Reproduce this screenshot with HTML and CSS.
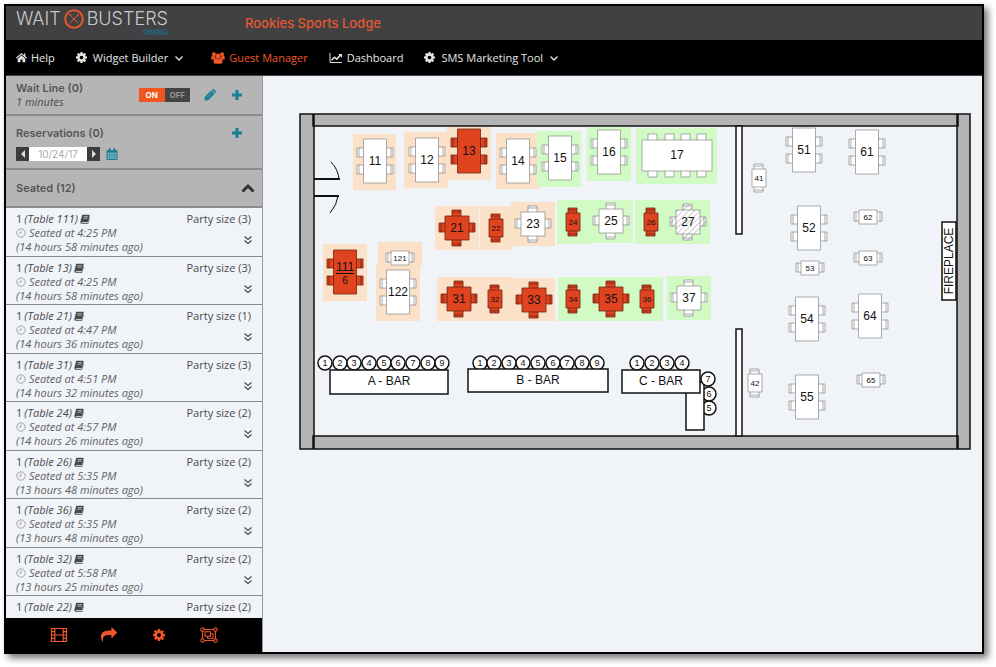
FILE: index.html
```html
<!DOCTYPE html>
<html lang="en">
<head>
<meta charset="utf-8">
<meta name="viewport" content="width=device-width, initial-scale=1">
<title>Waitbusters Dining - Guest Manager</title>
<link rel="stylesheet" href="styles.css">
</head>
<body>
<svg class="sprite" aria-hidden="true">
  <symbol id="home" viewBox="0 0 16 16"><path d="M8 1.500 0 8.500l1 1.200 7-6 7 6 1-1.200-2.500-2.200V2h-2v2.600z"/><path d="M8 5 2.500 9.700V15h4v-4h3v4h4V9.700z"/></symbol>
  <symbol id="cog" viewBox="0 128 1536 1536"><path d="M1024 896q0-106-75-181t-181-75-181 75-75 181 75 181 181 75 181-75 75-181zm512-109v222q0 12-8 23t-20 13l-185 28q-19 54-39 91 35 50 107 138 10 12 10 25t-9 23q-27 37-99 108t-94 71q-12 0-26-9l-138-108q-44 23-91 38-16 136-29 186-7 28-36 28h-222q-14 0-24.500-8.500t-11.500-21.500l-28-184q-49-16-90-37l-141 107q-10 9-25 9-14 0-25-11-126-114-165-168-7-10-7-23 0-12 8-23 15-21 51-66.500t54-70.500q-27-50-41-99l-183-27q-13-2-21-12.500t-8-23.500v-222q0-12 8-23t19-13l186-28q14-46 39-92-40-57-107-138-10-12-10-24 0-10 9-23 26-36 98.500-107.500t94.500-71.500q13 0 26 10l138 107q44-23 91-38 16-136 29-186 7-28 36-28h222q14 0 24.500 8.500t11.500 21.500l28 184q49 16 90 37l142-107q9-9 24-9 13 0 25 10 129 119 165 170 7 8 7 22 0 12-8 23-15 21-51 66.500t-54 70.500q26 50 41 98l183 28q13 2 21 12.500t8 23.500z"/></symbol>
  <symbol id="users" viewBox="0 0 18 16"><circle cx="3.500" cy="3" r="2.600"/><circle cx="14.500" cy="3" r="2.600"/><circle cx="9" cy="5.500" r="3.400"/><path d="M0 10V7q0-2 2-2 2 1 3 .5Q5 8 6.500 10zM18 10V7q0-2-2-2-2 1-3 .5Q13 8 11.500 10z"/><path d="M3 13q0-4.500 3-4.500 3 2 6 0 3 0 3 4.500 0 2.500-2.500 2.500h-7Q3 15.500 3 13z"/></symbol>
  <symbol id="chart" viewBox="0 0 18 16"><path d="M1 1v13h16" fill="none" stroke="currentColor" stroke-width="1.300"/><path d="m3 11 4-4 3 2.500L15 4" fill="none" stroke="currentColor" stroke-width="2"/><path d="M12 2.500h5v5z"/></symbol>
  <symbol id="chevron" viewBox="0 0 10 10"><path d="m1.500 3.500 3.500 3.500 3.500-3.500" fill="none" stroke="currentColor" stroke-width="1.300"/></symbol>
  <symbol id="up" viewBox="0 0 14 10"><path d="m1.500 8.500 5.500-5.500 5.500 5.500" fill="none" stroke="currentColor" stroke-width="3"/></symbol>
  <symbol id="pencil" viewBox="0 0 14 14"><path d="m1 9 7.500-7.500L12.500 5.500l-7.500 7.500L.5 13.500zM9.300 1l.7-.6q.8-.8 1.600 0l2 2q.8.8 0 1.600l-.6.700z"/><path d="m4 9.500 5-5" stroke="#b5b5b5" stroke-width=".6"/></symbol>
  <symbol id="plus" viewBox="0 0 12 12"><path d="M4.500 1h3v3.500H11v3H7.500V11h-3V7.500H1v-3h3.500z"/></symbol>
  <symbol id="left" viewBox="0 0 8 8"><path d="M6 0v8L2 4z"/></symbol>
  <symbol id="right" viewBox="0 0 8 8"><path d="M2 0v8l4-4z"/></symbol>
  <symbol id="calendar" viewBox="0 0 12 12"><path d="M1 2.500h10v9H1z" fill="#7fb3bf" stroke="currentColor"/><path d="M1 2h10v2.500H1zM3 0h1.500v3H3zM7.500 0H9v3H7.500z"/><path d="M1 7h10M1 9.200h10M3.600 4.500v7M6 4.500v7M8.400 4.500v7" stroke="currentColor" stroke-width=".5"/></symbol>
  <symbol id="book" viewBox="0 0 12 12"><path d="M3.500 1h7q1.500 0 1 1.500L9.700 9.300Q9.500 10 8.700 10H2.500q-.7.500 0 .8H9.500L11.500 4q.5.500.3 1.200L10 11q-.2.800-1 .8H2Q.2 11.500.4 9.500L2.300 2q.3-1 1.200-1z"/><path d="M4.500 3.200h5M4 5h5" stroke="#f1f4f8" stroke-width=".7"/></symbol>
  <symbol id="clock" viewBox="0 0 12 12"><circle cx="6" cy="6" r="5" fill="none" stroke="currentColor" stroke-width=".9"/><path d="M6 3v3.300H3.700" fill="none" stroke="currentColor" stroke-width=".8"/></symbol>
  <symbol id="down2" viewBox="0 0 10 10"><path d="m1.500 1.500 3.500 3 3.500-3M1.500 5.500l3.500 3 3.500-3" fill="none" stroke="currentColor" stroke-width="1.200"/></symbol>
  <symbol id="film" viewBox="0 0 18 16"><path d="M1.500 1.500h15v13h-15zM4.800 1.500v13M13.200 1.500v13M4.800 8h8.400M1.500 4.700h3.300M1.500 8h3.300M1.500 11.300h3.300M13.200 4.700h3.300M13.200 8h3.300M13.200 11.300h3.300" fill="none" stroke="currentColor" stroke-width="1.200"/></symbol>
  <symbol id="share" viewBox="0 0 1792 1792"><path d="M1792 640q0 26-19 45l-512 512q-19 19-45 19t-45-19-19-45v-256h-224q-98 0-175.500 6t-154 21.500-133 42.500-105.500 69.500-80 101-48.500 138.500-17.500 181q0 55 5 123 0 6 2.500 23.500t2.500 26.500q0 15-8.500 25t-23.500 10q-16 0-28-17-7-9-13-22t-13.500-30-10.500-24q-127-285-127-451 0-199 53-333 162-403 875-403h224v-256q0-26 19-45t45-19 45 19l512 512q19 19 19 45z"/></symbol>
  <symbol id="group" viewBox="0 0 18 16"><path d="M2.500 2.500h13v11h-13zM5 4.800h5.500v4.400H5zM10.500 6.800H13v4.400H7.500v-2" fill="none" stroke="currentColor" stroke-width="1.100"/><path d="M1 1h3v3H1zM14 1h3v3h-3zM1 12h3v3H1zM14 12h3v3h-3z" fill="#000" stroke="currentColor"/></symbol>
</svg>

<div class="window">
  <header class="brand">
    <div class="logo">
      <span>WAIT</span>
      <svg class="mark" viewBox="0 0 20 20" aria-hidden="true"><circle cx="10" cy="10" r="8.800"/><path d="m6 6 8 8M14 6l-8 8"/><path class="tip" d="m5.500 6.500 1.500-1M13 5.500l1.500 1"/></svg>
      <span class="word">BUSTERS<small>DINING</small></span>
    </div>
    <h1>Rookies Sports Lodge</h1>
  </header>

  <nav class="menu" aria-label="Main">
    <a href="#"><svg class="i11"><use href="#home"/></svg>Help</a>
    <a href="#" class="drop"><svg class="i11"><use href="#cog"/></svg>Widget Builder<svg class="i10"><use href="#chevron"/></svg></a>
    <a href="#" class="active"><svg class="i14"><use href="#users"/></svg>Guest Manager</a>
    <a href="#"><svg class="i14"><use href="#chart"/></svg>Dashboard</a>
    <a href="#" class="drop"><svg class="i11"><use href="#cog"/></svg>SMS Marketing Tool<svg class="i10"><use href="#chevron"/></svg></a>
  </nav>

  <div class="body">
    <aside class="side">
      <section class="panel wait">
        <div class="grow"><h2>Wait Line (0)</h2><em>1 minutes</em></div>
        <button class="toggle" role="switch" aria-checked="true" aria-label="Wait line"><span class="on">ON</span><span class="off">OFF</span></button>
        <button class="icon" aria-label="Edit wait line"><svg class="i14"><use href="#pencil"/></svg></button>
        <button class="icon" aria-label="Add to wait line"><svg class="i12"><use href="#plus"/></svg></button>
      </section>
      <section class="panel reserve">
        <div class="head"><h2>Reservations (0)</h2><button class="icon" aria-label="Add reservation"><svg class="i12"><use href="#plus"/></svg></button></div>
        <div class="date">
          <button class="step" aria-label="Previous day"><svg class="i8"><use href="#left"/></svg></button>
          <input type="text" value="10/24/17" aria-label="Reservation date">
          <button class="step" aria-label="Next day"><svg class="i8"><use href="#right"/></svg></button>
          <button class="icon" aria-label="Open calendar"><svg class="i12"><use href="#calendar"/></svg></button>
        </div>
      </section>
      <section class="panel seated">
        <h2>Seated (12)</h2>
        <button class="icon dark" aria-label="Collapse seated"><svg class="i14"><use href="#up"/></svg></button>
      </section>
      <ul class="list">
        <li><div><b>1 <i>(Table 111)</i><svg class="i10"><use href="#book"/></svg></b><em><svg class="i10"><use href="#clock"/></svg>Seated at 4:25 PM</em><em>(14 hours 58 minutes ago)</em></div><span>Party size (3)</span><button aria-label="More"><svg class="i10"><use href="#down2"/></svg></button></li>
        <li><div><b>1 <i>(Table 13)</i><svg class="i10"><use href="#book"/></svg></b><em><svg class="i10"><use href="#clock"/></svg>Seated at 4:25 PM</em><em>(14 hours 58 minutes ago)</em></div><span>Party size (3)</span><button aria-label="More"><svg class="i10"><use href="#down2"/></svg></button></li>
        <li><div><b>1 <i>(Table 21)</i><svg class="i10"><use href="#book"/></svg></b><em><svg class="i10"><use href="#clock"/></svg>Seated at 4:47 PM</em><em>(14 hours 36 minutes ago)</em></div><span>Party size (1)</span><button aria-label="More"><svg class="i10"><use href="#down2"/></svg></button></li>
        <li><div><b>1 <i>(Table 31)</i><svg class="i10"><use href="#book"/></svg></b><em><svg class="i10"><use href="#clock"/></svg>Seated at 4:51 PM</em><em>(14 hours 32 minutes ago)</em></div><span>Party size (3)</span><button aria-label="More"><svg class="i10"><use href="#down2"/></svg></button></li>
        <li><div><b>1 <i>(Table 24)</i><svg class="i10"><use href="#book"/></svg></b><em><svg class="i10"><use href="#clock"/></svg>Seated at 4:57 PM</em><em>(14 hours 26 minutes ago)</em></div><span>Party size (2)</span><button aria-label="More"><svg class="i10"><use href="#down2"/></svg></button></li>
        <li><div><b>1 <i>(Table 26)</i><svg class="i10"><use href="#book"/></svg></b><em><svg class="i10"><use href="#clock"/></svg>Seated at 5:35 PM</em><em>(13 hours 48 minutes ago)</em></div><span>Party size (2)</span><button aria-label="More"><svg class="i10"><use href="#down2"/></svg></button></li>
        <li><div><b>1 <i>(Table 36)</i><svg class="i10"><use href="#book"/></svg></b><em><svg class="i10"><use href="#clock"/></svg>Seated at 5:35 PM</em><em>(13 hours 48 minutes ago)</em></div><span>Party size (2)</span><button aria-label="More"><svg class="i10"><use href="#down2"/></svg></button></li>
        <li><div><b>1 <i>(Table 32)</i><svg class="i10"><use href="#book"/></svg></b><em><svg class="i10"><use href="#clock"/></svg>Seated at 5:58 PM</em><em>(13 hours 25 minutes ago)</em></div><span>Party size (2)</span><button aria-label="More"><svg class="i10"><use href="#down2"/></svg></button></li>
        <li><div><b>1 <i>(Table 22)</i><svg class="i10"><use href="#book"/></svg></b></div><span>Party size (2)</span></li>
      </ul>
      <div class="tools">
        <button aria-label="Film"><svg class="i18"><use href="#film"/></svg></button>
        <button aria-label="Share"><svg class="i16"><use href="#share"/></svg></button>
        <button aria-label="Settings"><svg class="i14"><use href="#cog"/></svg></button>
        <button aria-label="Group objects"><svg class="i18"><use href="#group"/></svg></button>
      </div>
    </aside>

    <main class="floor">
      <svg class="plan" viewBox="263 76 719 576" preserveAspectRatio="xMinYMin meet" role="img" aria-label="Floor plan">
        <defs>
          <pattern id="hatch" width="4" height="4" patternUnits="userSpaceOnUse" patternTransform="rotate(45)"><path d="M0 0h4v4H0z" fill="#fff"/><path d="M0 0v4" stroke="#999" stroke-width="1"/></pattern>
          <g id="t4"><path d="M-18-13h7v9h-7zM-18 4h7v9h-7zM11-13h7v9h-7zM11 4h7v9h-7z"/><path d="M-16-13v9M-16 4v9M16-13v9M16 4v9" fill="none"/><path d="M-11.500-22h23v44h-23z"/></g>
          <g id="sq"><path d="M-5-18H4v7h-9zM-5 11H4v7h-9zM-18-5h7v9h-7zM11-5h7v9h-7z"/><path d="M-5-16H4M-5 16H4M-16-5v9M16-5v9" fill="none"/><path d="M-12-12h24v24h-24z"/></g>
          <g id="sv"><path d="M-5-14H4v6h-9zM-5 8H4v6h-9z"/><path d="M-5-12H4M-5 12H4" fill="none"/><path d="M-7-9H7V9H-7z"/></g>
          <g id="sh"><path d="M-14-5h6v9h-6zM8-5h6v9H8z"/><path d="M-12-5v9M12-5v9" fill="none"/><path d="M-9-7H9V7H-9z"/></g>
        </defs>

        <g class="orange">
          <path d="M353 134h43v56h-43zM404 132h44v56h-44zM447 127h44v53h-44zM496 133h44v56h-44z"/>
          <path d="M435 206h44v44h-44zM480 206h32v44h-32zM511 202h44v44h-44z"/>
          <path d="M437 277h75v44h-75zM512 278h43v43h-43zM323 244h44v57h-44zM378 242h44v24h-44zM376 264h44v57h-44z"/>
        </g>
        <g class="green">
          <path d="M537 131h44v56h-44zM587 127h44v54h-44zM636 128h81v56h-81z"/>
          <path d="M557 200h32v44h-32zM588 200h45v43h-45zM635 200h75v44h-75zM558 277h105v44H558zM667 276h44v44h-44z"/>
        </g>

        <g class="walls">
          <path d="M313 114h645v12H313zM313 436h645v13H313zM300 114h14v335h-14zM957 114h13v335h-13z"/>
          <path class="white" d="M736 126h6v108h-6zM736 329h6v107h-6zM942 222h14v78h-14z"/>
          <path class="line" d="M314 179h26M314 196h25"/>
          <path class="arc" d="M331 162q7 7 8 17M338 196q-1 9-8 17"/>
        </g>
        <text class="sign" transform="translate(949 261) rotate(-90)">FIREPLACE</text>

        <g class="free">
          <g transform="translate(375 161)"><use href="#t4"/><text>11</text></g>
          <g transform="translate(427 160)"><use href="#t4"/><text>12</text></g>
          <g transform="translate(518 161)"><use href="#t4"/><text>14</text></g>
          <g transform="translate(560 158)"><use href="#t4"/><text>15</text></g>
          <g transform="translate(609 152)"><use href="#t4"/><text>16</text></g>
          <g transform="translate(677 155)"><path d="M-29-21h9v7h-9zM-12-21h9v7h-9zM4-21h9v7H4zM20-21h9v7h-9zM-29 15h9v7h-9zM-12 15h9v7h-9zM4 15h9v7H4zM20 15h9v7h-9z"/><path d="M-35-15h70v31h-70z"/><text>17</text></g>
          <g transform="translate(533 224)"><use href="#sq"/><text>23</text></g>
          <g transform="translate(611 221)"><use href="#sq"/><text>25</text></g>
          <g class="hatched" transform="translate(688 222)"><use href="#sq"/><text>27</text></g>
          <g transform="translate(689 298)"><use href="#sq"/><text>37</text></g>
          <g class="small" transform="translate(400 258)"><use href="#sh"/><text>121</text></g>
          <g transform="translate(398 292)"><use href="#t4"/><text>122</text></g>
          <g transform="translate(804 150)"><use href="#t4"/><text>51</text></g>
          <g transform="translate(809 228)"><use href="#t4"/><text>52</text></g>
          <g transform="translate(867 152)"><use href="#t4"/><text>61</text></g>
          <g transform="translate(807 319)"><use href="#t4"/><text>54</text></g>
          <g transform="translate(870 316)"><use href="#t4"/><text>64</text></g>
          <g transform="translate(807 397)"><use href="#t4"/><text>55</text></g>
          <g class="small" transform="translate(759 178)"><use href="#sv"/><text>41</text></g>
          <g class="small" transform="translate(755 383)"><use href="#sv"/><text>42</text></g>
          <g class="small" transform="translate(868 217)"><use href="#sh"/><text>62</text></g>
          <g class="small" transform="translate(868 258)"><use href="#sh"/><text>63</text></g>
          <g class="small" transform="translate(810 268)"><use href="#sh"/><text>53</text></g>
          <g class="small" transform="translate(871 380)"><use href="#sh"/><text>65</text></g>
        </g>

        <g class="busy">
          <g transform="translate(469 151)"><use href="#t4"/><text>13</text></g>
          <g transform="translate(345 272)"><use href="#t4"/><text y="-5">111</text><path class="rule" d="M-9 1.500H9"/><text class="seats" y="8">6</text></g>
          <g transform="translate(457 228)"><use href="#sq"/><text>21</text></g>
          <g transform="translate(459 299)"><use href="#sq"/><text>31</text></g>
          <g transform="translate(534 300)"><use href="#sq"/><text>33</text></g>
          <g transform="translate(611 299)"><use href="#sq"/><text>35</text></g>
          <g class="small" transform="translate(496 228)"><use href="#sv"/><text>22</text></g>
          <g class="small" transform="translate(573 222)"><use href="#sv"/><text>24</text></g>
          <g class="small" transform="translate(651 222)"><use href="#sv"/><text>26</text></g>
          <g class="small" transform="translate(495 299)"><use href="#sv"/><text>32</text></g>
          <g class="small" transform="translate(573 299)"><use href="#sv"/><text>34</text></g>
          <g class="small" transform="translate(647 299)"><use href="#sv"/><text>36</text></g>
        </g>

        <g class="bar">
          <g><circle cx="325" cy="363" r="7"/><circle cx="340" cy="363" r="7"/><circle cx="354" cy="363" r="7"/><circle cx="369" cy="363" r="7"/><circle cx="384" cy="363" r="7"/><circle cx="398" cy="363" r="7"/><circle cx="413" cy="363" r="7"/><circle cx="428" cy="363" r="7"/><circle cx="442" cy="363" r="7"/></g>
          <g class="seat"><text x="325" y="363">1</text><text x="340" y="363">2</text><text x="354" y="363">3</text><text x="369" y="363">4</text><text x="384" y="363">5</text><text x="398" y="363">6</text><text x="413" y="363">7</text><text x="428" y="363">8</text><text x="442" y="363">9</text></g>
          <g><circle cx="480" cy="363" r="7"/><circle cx="494" cy="363" r="7"/><circle cx="509" cy="363" r="7"/><circle cx="523" cy="363" r="7"/><circle cx="538" cy="363" r="7"/><circle cx="553" cy="363" r="7"/><circle cx="567" cy="363" r="7"/><circle cx="582" cy="363" r="7"/><circle cx="597" cy="363" r="7"/></g>
          <g class="seat"><text x="480" y="363">1</text><text x="494" y="363">2</text><text x="509" y="363">3</text><text x="523" y="363">4</text><text x="538" y="363">5</text><text x="553" y="363">6</text><text x="567" y="363">7</text><text x="582" y="363">8</text><text x="597" y="363">9</text></g>
          <g><circle cx="637" cy="363" r="7"/><circle cx="652" cy="363" r="7"/><circle cx="667" cy="363" r="7"/><circle cx="682" cy="363" r="7"/><circle cx="709" cy="408" r="7"/><circle cx="709" cy="394" r="7"/></g>
          <path d="M686 382h18v48h-18z"/>
          <circle cx="708" cy="379" r="7"/>
          <g class="seat"><text x="637" y="363">1</text><text x="652" y="363">2</text><text x="667" y="363">3</text><text x="682" y="363">4</text><text x="708" y="379">7</text><text x="709" y="394">6</text><text x="709" y="408">5</text></g>
          <path d="M330 370h118v24H330zM468 369h140v23H468zM622 370h78v23h-78z"/>
          <g class="name"><text x="389" y="381">A - BAR</text><text x="538" y="380">B - BAR</text><text x="661" y="381">C - BAR</text></g>
        </g>
      </svg>
    </main>
  </div>
</div>
</body>
</html>
```
FILE: styles.css
```css
* { box-sizing: border-box; }

body {
  margin: 0;
  padding: 4px 12px 13px 4px;
  min-height: 100vh;
  display: flex;
  background: #fff;
  color: #4a4a4c;
  font: 11px/14px "Open Sans", "Noto Sans", sans-serif;
}

button {
  border: 0;
  padding: 0;
  background: none;
  font: inherit;
  color: inherit;
  display: flex;
  align-items: center;
  justify-content: center;
}

svg { fill: currentColor; flex: none; }
.sprite { position: absolute; width: 0; height: 0; }
.i8 { width: 8px; height: 8px; }
.i10 { width: 10px; height: 10px; }
.i11 { width: 11px; height: 11px; }
.i12 { width: 12px; height: 12px; }
.i14 { width: 14px; height: 12px; }
.i16 { width: 16px; height: 16px; }
.i18 { width: 18px; height: 16px; }

.window {
  flex: 1;
  display: flex;
  flex-direction: column;
  border: 2px solid #000;
  box-shadow: 4px 4px 7px rgba(0, 0, 0, .55);
  background: #f0f4f8;
}

/* Header */
.brand {
  height: 34px;
  display: flex;
  align-items: center;
  background: #414143;
}
.logo {
  width: 239px;
  padding: 2px 0 0 10px;
  display: flex;
  align-items: flex-start;
  gap: 3px;
  color: #c9c9ca;
  font: 300 18px/14px Inter, sans-serif;
}
.mark { width: 20px; height: 20px; margin: -3px 0; fill: none; stroke: #e9572b; stroke-width: 2; }
.mark path { stroke-width: 1; }
.mark .tip { stroke-width: 2; }
.word { display: flex; flex-direction: column; align-items: flex-end; }
.word small {
  padding-top: 3px;
  color: #1d6d80;
  font: 600 7px/7px Inter, sans-serif;
}
.brand h1 {
  margin: 0;
  color: #e2582f;
  font: 500 13px/16px Inter, sans-serif;
}

/* Navigation */
.menu {
  height: 36px;
  padding: 0 10px;
  display: flex;
  align-items: center;
  gap: 21px;
  background: #000;
  border-bottom: 1px solid #444;
}
.menu a {
  display: flex;
  align-items: center;
  gap: 4px;
  color: #e6e6e6;
  font-weight: 500;
  text-decoration: none;
}
.menu .drop { gap: 6px; }
.menu .active { color: #f0562a; margin-left: 6px; }

.body { flex: 1; display: flex; min-height: 0; }

/* Sidebar */
.side {
  width: 257px;
  display: flex;
  flex-direction: column;
  border-right: 1px solid #999;
}
.panel {
  padding: 0 18px 0 10px;
  background: #b5b5b5;
  border-bottom: 2px solid #8b8b8b;
}
.panel h2 { margin: 0; font: 600 11px/14px Inter, sans-serif; color: #555; }
.grow { flex: 1; }
.wait { height: 40px; display: flex; align-items: center; gap: 13px; }
.icon { color: #177f96; width: 14px; height: 14px; }
.icon.dark { color: #333; }
.toggle {
  height: 14px;
  width: 51px;
  font: 700 8px/14px Inter, sans-serif;
  align-items: stretch;
}
.toggle span { flex: 1; }
.toggle .on { background: #f1551f; color: #fff; }
.toggle .off { background: #444446; color: #999; }
.reserve { height: 54px; padding-top: 10px; }
.head { display: flex; justify-content: space-between; }
.date { display: flex; margin-top: 7px; align-items: center; }
.date input {
  width: 58px;
  height: 14px;
  border: 0;
  padding: 0;
  background: #fff;
  color: #aaa;
  font: 10px/14px Inter, sans-serif;
  text-align: center;
}
.step { width: 13px; height: 14px; background: #3c3c3e; color: #ddd; }
.date .icon { margin-left: 5px; }
.seated {
  height: 38px;
  padding-right: 7px;
  display: flex;
  align-items: center;
  justify-content: space-between;
}

.list {
  flex: 1;
  min-height: 0;
  margin: 0;
  padding: 0;
  list-style: none;
  display: grid;
  grid-template-rows: repeat(8, 1fr) 22px;
  overflow: hidden;
}
.list li {
  display: grid;
  grid-template-columns: 1fr auto;
  grid-template-rows: 14px 28px;
  padding: 4px 9px 0 10px;
  border-bottom: 1px solid #888;
}
.list li:last-child { border: 0; }
.list div { grid-row: span 2; }
.list span { padding-right: 2px; }
.list b { display: flex; align-items: center; font-weight: 500; gap: 2px; }
.list em { display: flex; align-items: center; gap: 3px; color: #626264; }
.list em svg { color: #8a8a8c; }
.list button { align-self: center; justify-self: end; }

.tools {
  height: 34px;
  padding: 0 28px;
  display: grid;
  grid-template-columns: repeat(4, 1fr);
  align-items: center;
  background: #000;
  color: #f0562a;
}

/* Floor plan */
.floor { flex: 1; min-width: 0; }
.plan { display: block; width: 100%; height: auto; }
.plan text {
  font: 12px "Liberation Sans", Arial, sans-serif;
  text-anchor: middle;
  dominant-baseline: central;
  fill: #111;
  stroke: none;
}
.plan .small text { font-size: 8px; }
.plan .seat text { font-size: 9px; }
.plan text.seats { font-size: 10px; }
.orange { fill: #fbe1c8; }
.green { fill: #d2fac4; }
.free { fill: #fff; stroke: #888; stroke-width: .7; }
.hatched { fill: url(#hatch); }
.busy { fill: #e0431f; stroke: #6f2413; stroke-width: .8; }
.busy .rule { stroke: #111; stroke-width: 1; }
.walls { fill: #b4b4b4; stroke: #111; stroke-width: 1.5; }
.walls .white { fill: #fff; }
.walls .line { stroke-width: 2; }
.walls .arc { fill: none; stroke-width: 1; }
.bar { fill: #fff; stroke: #111; stroke-width: 1.5; }
```
